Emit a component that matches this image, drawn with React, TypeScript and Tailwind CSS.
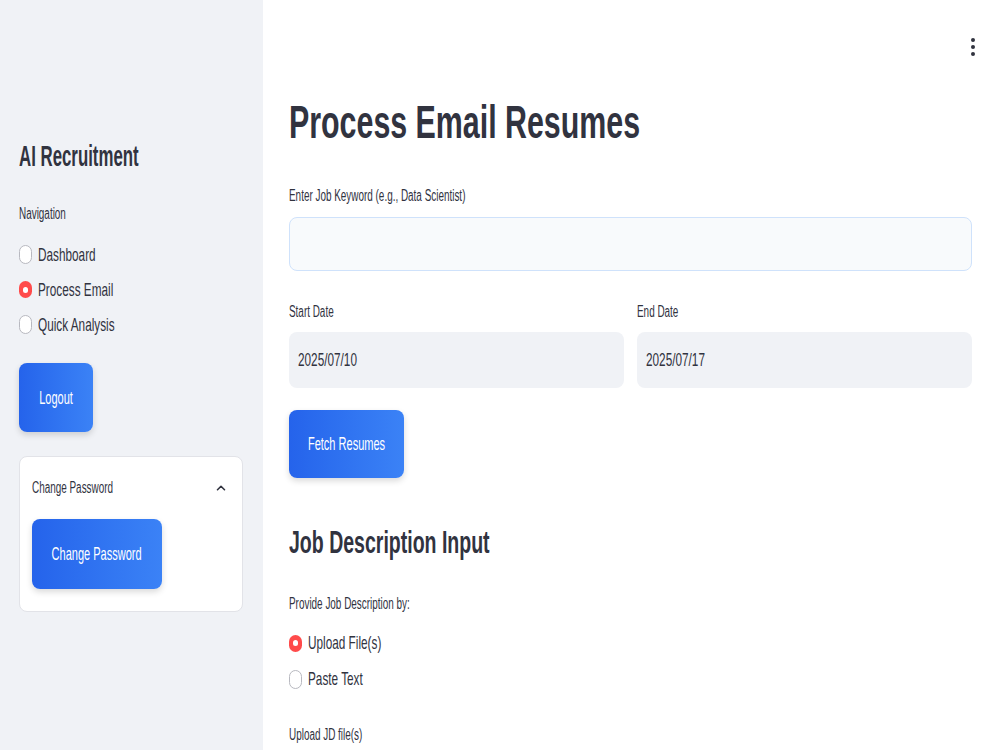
import { ChevronUp } from "lucide-react";

// la captura tiene el texto muy estrecho, así que se comprime en horizontal
const font = "font-['Liberation_Sans',Arial,sans-serif]";

function Radio({ checked, label }: { checked?: boolean; label: string }) {
  return (
    <div className="flex items-center gap-[6px]">
      {checked ? (
        <span className="flex h-[17px] w-[13px] items-center justify-center rounded-full bg-[#ff4b4b]">
          <span className="h-[6px] w-[5px] rounded-full bg-white" />
        </span>
      ) : (
        <span className="h-[19px] w-[13px] rounded-full border border-[#b8b9c0] bg-white" />
      )}
      <span className="inline-block origin-left scale-x-[0.62] whitespace-nowrap text-[19px] leading-[24px] text-[#31333f]">
        {label}
      </span>
    </div>
  );
}

function Label({ children }: { children: string }) {
  return (
    <div className="origin-left scale-x-[0.62] whitespace-nowrap text-[16px] leading-[20px] text-[#31333f]">
      {children}
    </div>
  );
}

function BlueButton({ children, className }: { children: string; className: string }) {
  return (
    <button
      className={`flex items-center justify-center rounded-lg bg-gradient-to-r from-[#2563eb] to-[#3b82f6] text-white shadow-[0_3px_6px_rgba(0,0,0,0.15)] ${className}`}
    >
      <span className="inline-block scale-x-[0.58] whitespace-nowrap text-[19px] leading-[24px]">{children}</span>
    </button>
  );
}

export default function App() {
  return (
    <div className={`flex h-[750px] w-[1000px] overflow-hidden bg-white ${font}`}>
      {/* SIDEBAR */}
      <aside className="flex w-[263px] shrink-0 flex-col bg-[#f0f2f6] px-[19px] pt-[138px]">
        <h2 className="origin-left scale-x-[0.58] whitespace-nowrap text-[29px] font-semibold leading-[36px] text-[#31333f]">
          AI Recruitment
        </h2>
        <div className="mt-[30px]">
          <Label>Navigation</Label>
        </div>
        <div className="mt-[13px] flex flex-col">
          <div className="flex h-[35px] items-center">
            <Radio label="Dashboard" />
          </div>
          <div className="flex h-[35px] items-center">
            <Radio checked label="Process Email" />
          </div>
          <div className="flex h-[35px] items-center">
            <Radio label="Quick Analysis" />
          </div>
        </div>
        <BlueButton className="mt-[21px] h-[69px] w-[74px]">Logout</BlueButton>

        <div className="mt-[24px] w-[224px] rounded-lg border border-[#e2e3e8] bg-white px-[12px] pb-[22px]">
          <div className="flex h-[62px] items-center justify-between">
            <span className="inline-block origin-left scale-x-[0.62] whitespace-nowrap text-[16px] leading-[20px] text-[#31333f]">
              Change Password
            </span>
            <ChevronUp className="mr-[2px] h-[14px] w-[14px] text-[#31333f]" strokeWidth={2.75} />
          </div>
          <BlueButton className="h-[70px] w-[130px]">Change Password</BlueButton>
        </div>
      </aside>

      {/* MAIN */}
      <main className="flex min-w-0 flex-1 flex-col pl-[26px] pr-[28px]">
        <div className="flex h-[94px] items-start justify-end pt-[38px]">
          <div className="mr-[-3px] flex flex-col gap-[3px]">
            <span className="h-[4px] w-[4px] rounded-full bg-[#31333f]" />
            <span className="h-[4px] w-[4px] rounded-full bg-[#31333f]" />
            <span className="h-[4px] w-[4px] rounded-full bg-[#31333f]" />
          </div>
        </div>

        <h1 className="origin-left scale-x-[0.646] whitespace-nowrap text-[47px] font-bold leading-[56px] text-[#31333f]">
          Process Email Resumes
        </h1>

        <div className="mt-[36px]">
          <Label>Enter Job Keyword (e.g., Data Scientist)</Label>
        </div>
        <input className="mt-[11px] h-[54px] w-full rounded-lg border border-[#cfe2fb] bg-[#f8fafc] outline-none" />

        <div className="mt-[30px] grid grid-cols-2 gap-[13px]">
          <div className="flex flex-col">
            <div className="mt-[1px]">
              <Label>Start Date</Label>
            </div>
            <div className="mt-[10px] flex h-[56px] items-center rounded-lg bg-[#f0f2f6] px-[9px]">
              <span className="inline-block origin-left scale-x-[0.62] text-[19px] leading-[24px] text-[#31333f]">
                2025/07/10
              </span>
            </div>
          </div>
          <div className="flex flex-col">
            <div className="mt-[1px]">
              <Label>End Date</Label>
            </div>
            <div className="mt-[10px] flex h-[56px] items-center rounded-lg bg-[#f0f2f6] px-[9px]">
              <span className="inline-block origin-left scale-x-[0.62] text-[19px] leading-[24px] text-[#31333f]">
                2025/07/17
              </span>
            </div>
          </div>
        </div>

        <BlueButton className="mt-[22px] h-[68px] w-[115px]">Fetch Resumes</BlueButton>

        <h3 className="mt-[44px] origin-left scale-x-[0.61] whitespace-nowrap text-[32px] font-semibold leading-[40px] text-[#31333f]">
          Job Description Input
        </h3>

        <div className="mt-[32px]">
          <Label>Provide Job Description by:</Label>
        </div>
        <div className="mt-[11px] flex flex-col">
          <div className="flex h-[36px] items-center">
            <Radio checked label="Upload File(s)" />
          </div>
          <div className="flex h-[36px] items-center">
            <Radio label="Paste Text" />
          </div>
        </div>

        <div className="mt-[28px]">
          <Label>Upload JD file(s)</Label>
        </div>
      </main>
    </div>
  );
}
